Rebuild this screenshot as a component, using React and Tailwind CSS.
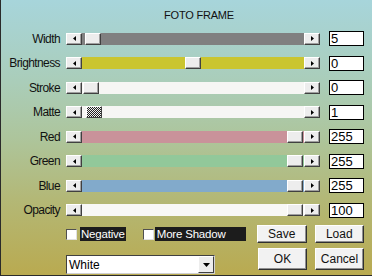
import React from "react";

const rows = [
  { label: "Width", track: "bg-[#808080]", thumb: 3, value: "5" },
  { label: "Brightness", track: "bg-[#cac52f]", thumb: 103, value: "0" },
  { label: "Stroke", track: "bg-[#f6f6f4]", thumb: 1, value: "0" },
  { label: "Matte", track: "bg-[#f6f6f4]", thumb: 4, value: "1", checker: true },
  { label: "Red", track: "bg-[#c9929a]", thumb: 205, value: "255" },
  { label: "Green", track: "bg-[#92c89a]", thumb: 205, value: "255" },
  { label: "Blue", track: "bg-[#82aacb]", thumb: 205, value: "255" },
  { label: "Opacity", track: "bg-[#f8f8f6]", thumb: 205, value: "100" },
];

const raised =
  "border border-t-white border-l-white border-r-[#404040] border-b-[#404040] shadow-[inset_-1px_-1px_#a0a0a0] bg-[#ededed]";

function ArrowBtn({ dir }) {
  return (
    <div className={`w-[16px] h-[12px] flex items-center justify-center ${raised}`}>
      <svg width="3" height="5" viewBox="0 0 3 5">
        {dir === "left" ? (
          <polygon points="3,0 3,5 0,2.5" fill="#000" />
        ) : (
          <polygon points="0,0 0,5 3,2.5" fill="#000" />
        )}
      </svg>
    </div>
  );
}

function Row({ r }) {
  return (
    <div className="flex items-center h-[15px]">
      <div className="w-[59px] text-right text-[12px] leading-[14px] tracking-[-0.6px] text-[#111]">
        {r.label}
      </div>
      <div className="ml-[6px]">
        <ArrowBtn dir="left" />
      </div>
      <div className={`relative w-[222px] h-[12px] ${r.track}`}>
        {r.checker ? (
          <div
            className="absolute top-0 w-[16px] h-[12px] border border-t-white border-l-white border-r-[#404040] border-b-[#404040] bg-[repeating-conic-gradient(#222_0_25%,#f0f0f0_0_50%)] bg-[length:2px_2px]"
            style={{ left: r.thumb }}
          />
        ) : (
          <div className={`absolute top-0 w-[16px] h-[12px] ${raised}`} style={{ left: r.thumb }} />
        )}
      </div>
      <ArrowBtn dir="right" />
      <div className="ml-[9px] w-[35px] h-[15px] border border-black bg-white text-[13px] leading-[13px] pl-[1px] text-black">
        {r.value}
      </div>
    </div>
  );
}

function Check() {
  return (
    <div className="w-[11px] h-[11px] bg-white border border-t-[#505050] border-l-[#505050] border-r-[#e0e0e0] border-b-[#e0e0e0]" />
  );
}

function Btn({ children, w, h }) {
  return (
    <div
      className={`${w} ${h} flex items-center justify-center text-[12px] text-[#111] border border-t-white border-l-white border-r-[#303030] border-b-[#303030] shadow-[inset_-1px_-1px_#909090] bg-[#f2f2f2]`}
    >
      {children}
    </div>
  );
}

export default function App() {
  return (
    <div className="w-[372px] h-[276px] overflow-hidden border-l border-b border-[#2a2a2a] bg-[linear-gradient(180deg,#a7d5db_0%,#aacdb9_30%,#adc59c_50%,#b3b877_72%,#b9aa50_100%)] font-['Liberation_Sans',Arial,sans-serif]">
      <div className="h-[31px] pt-[9px] pl-[163px] text-[11px] leading-[13px] tracking-[-0.2px] text-[#111]">
        FOTO FRAME
      </div>
      <div className="flex flex-col gap-[9.5px]">
        {rows.map((r) => (
          <Row key={r.label} r={r} />
        ))}
      </div>
      <div className="mt-[7.5px] flex items-center h-[18px]">
        <div className="ml-[65px]">
          <Check />
        </div>
        <div className="ml-[3px] h-[14px] bg-[#1c1c1c] text-white text-[11.5px] leading-[14px] tracking-[-0.2px] px-[1px]">
          Negative
        </div>
        <div className="ml-[17px]">
          <Check />
        </div>
        <div className="ml-[1px] w-[91px] h-[14px] bg-[#1c1c1c] text-white text-[11.5px] leading-[14px] tracking-[-0.2px] px-[2px]">
          More Shadow
        </div>
        <div className="ml-[11px]">
          <Btn w="w-[50px]" h="h-[18px]">Save</Btn>
        </div>
        <div className="ml-[8px]">
          <Btn w="w-[49px]" h="h-[18px]">Load</Btn>
        </div>
      </div>
      <div className="mt-[5px] flex items-start">
        <div className="ml-[65px] mt-[7px] w-[149px] h-[19px] bg-white border border-t-[#404040] border-l-[#404040] border-r-[#d0d0d0] border-b-[#d0d0d0] flex items-center justify-between">
          <span className="pl-[2px] text-[12px] text-black">White</span>
          <div className="w-[16px] h-[17px] flex items-center justify-center border border-t-white border-l-white border-r-[#404040] border-b-[#404040] bg-[#ededed]">
            <svg width="7" height="4" viewBox="0 0 7 4">
              <polygon points="0,0 7,0 3.5,4" fill="#000" />
            </svg>
          </div>
        </div>
        <div className="ml-[43px]">
          <Btn w="w-[49px]" h="h-[22px]">OK</Btn>
        </div>
        <div className="ml-[8px]">
          <Btn w="w-[49px]" h="h-[22px]">Cancel</Btn>
        </div>
      </div>
    </div>
  );
}
